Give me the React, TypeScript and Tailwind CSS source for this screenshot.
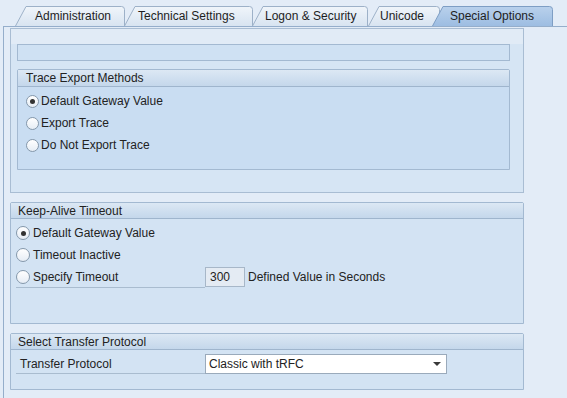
import clsx from "clsx";

const tabs = [
  { label: "Administration", w: 110, cls: "w-[110px] pl-[20px]" },
  { label: "Technical Settings", w: 129, cls: "-ml-[1px] w-[129px] pl-[14px]" },
  { label: "Logon & Security", w: 116, cls: "-ml-[1px] w-[116px] pl-[13px]" },
  { label: "Unicode", w: 72, cls: "w-[72px] pl-[12px]" },
  { label: "Special Options", w: 121, cls: "-ml-[8px] w-[121px] pl-[18px]", active: true },
];

export default function App() {
  return (
    <div className="h-[398px] w-[567px] overflow-hidden bg-[#e3ecf7] font-['Liberation_Sans',Arial,sans-serif] text-[12px] leading-none text-[#222]">
      <div className="flex h-[26px] items-end pl-[15px]">
        {tabs.map((t) => (
          <Tab active={t.active} className={t.cls} key={t.label} label={t.label} width={t.w} />
        ))}
      </div>

      <div className="ml-[3px] h-[372px] border-l border-t border-[#95aecb] pl-[6px] pt-[1px]">
        {/* scrolled area */}
        <div className="h-[165px] w-[514px] border border-[#a9bdd3] bg-[#d6e5f4]">
          <div className="h-[15px] bg-[#e1ebf6]" />
          <div className="ml-[6px] h-[17px] w-[493px] border border-[#a3b9d1] bg-[#cfe1f3]" />
          <div className="ml-[6px] mt-[8px] w-[493px] rounded-t-[2px] border border-[#a3b9d1] bg-[#c9ddf2]">
            <GroupHeader title="Trace Export Methods" pad="pl-[8px]" tall />
            <div className="pb-[13px] pl-[8px] pt-[3px]">
              <RadioRow checked label="Default Gateway Value" size="small" />
              <RadioRow label="Export Trace" size="small" />
              <RadioRow label="Do Not Export Trace" size="small" />
            </div>
          </div>
        </div>

        <div className="mt-[9px] w-[514px] rounded-t-[2px] border border-[#a3b9d1] bg-[#d3e3f3]">
          <GroupHeader title="Keep-Alive Timeout" pad="pl-[7px]" />
          <div className="pb-[35px] pl-[5px] pt-[3px]">
            <RadioRow checked label="Default Gateway Value" />
            <RadioRow label="Timeout Inactive" />
            <div className="flex h-[22px] items-center">
              <div className="flex h-[21px] w-[189px] items-center gap-[3px] border-b border-[#a9bccf]">
                <Radio />
                <span>Specify Timeout</span>
              </div>
              <div className="flex h-[20px] w-[40px] items-center border border-[#a7b7c8] bg-[#e4ebf3] pl-[4px]">
                300
              </div>
              <span className="ml-[3px]">Defined Value in Seconds</span>
            </div>
          </div>
        </div>

        <div className="mt-[9px] w-[514px] rounded-t-[2px] border border-[#a3b9d1] bg-[#d3e3f3]">
          <GroupHeader title="Select Transfer Protocol" pad="pl-[7px]" />
          <div className="flex pb-[15px] pl-[5px] pt-[4px]">
            <div className="flex h-[20px] w-[189px] items-center border-b border-[#a9bccf] pl-[4px]">
              Transfer Protocol
            </div>
            <div className="flex h-[20px] w-[242px] items-center justify-between border border-[#9aaabb] bg-white pl-[3px] pr-[5px]">
              <span>Classic with tRFC</span>
              <svg className="h-[4px] w-[8px]" viewBox="0 0 8 4">
                <path d="M0 0h8L4 4z" fill="#3a3a3a" />
              </svg>
            </div>
          </div>
        </div>
      </div>
    </div>
  );
}

function Tab({
  label,
  width,
  active,
  className,
}: {
  label: string;
  width: number;
  active?: boolean;
  className: string;
}) {
  const id = "g-" + label.replace(/[^a-z]/gi, "");
  const d = `M0.5 21 L11 1.5 H${width - 3.5} Q${width - 0.5} 1.5 ${width - 0.5} 4.5 V21`;
  return (
    <div className={clsx("relative flex h-[21px] shrink-0 items-center", className)}>
      <svg className="absolute inset-0" height="21" viewBox={`0 0 ${width} 21`} width={width}>
        <defs>
          <linearGradient id={id} x1="0" x2="0" y1="0" y2="1">
            <stop offset="0" stopColor={active ? "#b9d1ec" : "#f0f5fa"} />
            <stop offset="1" stopColor={active ? "#9dbde2" : "#d8e4f1"} />
          </linearGradient>
        </defs>
        <path d={d} fill={`url(#${id})`} stroke={active ? "#7e9ec4" : "#9db1c8"} />
      </svg>
      <span className="relative pt-[1px] text-[#1e1e1e]">{label}</span>
    </div>
  );
}

function GroupHeader({ title, pad, tall }: { title: string; pad: string; tall?: boolean }) {
  return (
    <div
      className={clsx(
        "flex items-center border-b border-[#9fb5cd] bg-gradient-to-b from-[#dce8f4] to-[#c4d7eb] text-[#222]",
        tall ? "h-[17px]" : "h-[16px]",
        pad,
      )}
    >
      {title}
    </div>
  );
}

function Radio({ checked, size }: { checked?: boolean; size?: "small" }) {
  return (
    <span
      className={clsx(
        "flex shrink-0 items-center justify-center rounded-full border border-[#8598ab] bg-gradient-to-b from-white to-[#e6edf5]",
        size === "small" ? "h-[13px] w-[13px]" : "h-[14px] w-[14px]",
      )}
    >
      {checked && <span className="h-[5px] w-[5px] rounded-full bg-[#333]" />}
    </span>
  );
}

function RadioRow({ label, checked, size }: { label: string; checked?: boolean; size?: "small" }) {
  return (
    <div className={clsx("flex h-[22px] items-center", size === "small" ? "gap-[2px]" : "gap-[3px]")}>
      <Radio checked={checked} size={size} />
      <span>{label}</span>
    </div>
  );
}
